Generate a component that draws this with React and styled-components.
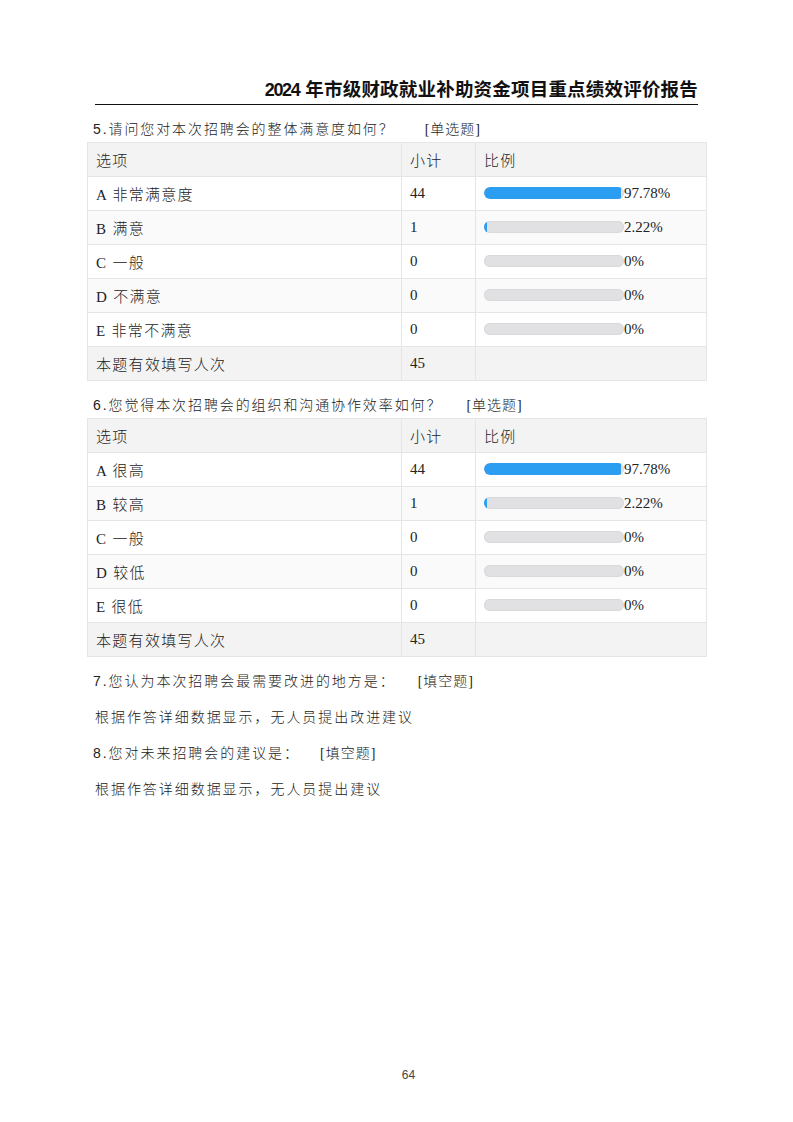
import React from 'react'
import styled, { createGlobalStyle } from 'styled-components'

const GlobalStyle = createGlobalStyle`
  html, body {
    margin: 0;
    padding: 0;
    background: #fff;
  }
`

const Page = styled.div`
  width: 793px;
  height: 1122px;
  box-sizing: border-box;
  padding: 76px 87px 0 87px;
  display: flex;
  flex-direction: column;
  font-family: "Liberation Serif", "Noto Sans CJK SC", serif;
  color: #222;
`

const Header = styled.div`
  margin: 0 8px;
  padding-bottom: 2px;
  border-bottom: 1.5px solid #111;
  text-align: right;
  font-family: "Noto Sans CJK SC", sans-serif;
  font-weight: 700;
  font-size: 18.5px;
  line-height: 24px;
  letter-spacing: 0.2px;
  color: #111;
`

const Year = styled.span`
  font-family: "Liberation Sans Narrow", "Liberation Sans", sans-serif;
  font-weight: 700;
  font-size: 18px;
  letter-spacing: -1.4px;
  margin-right: 6px;
`

const Question = styled.div`
  height: 37px;
  box-sizing: border-box;
  padding: 11px 0 0 6px;
  line-height: 26px;
  font-family: "Liberation Sans", "Noto Sans CJK SC", sans-serif;
  font-weight: 300;
  font-size: 14px;
  letter-spacing: 1.9px;
  color: #222;
  white-space: nowrap;
`

const Tag = styled.span`
  margin-left: ${p => p.$gap}px;
  font-family: "Liberation Serif", "Noto Sans CJK SC", serif;
  letter-spacing: 1px;
`

const TextLine = styled.div`
  height: 36px;
  line-height: 36px;
  padding-left: ${p => p.$indent || 6}px;
  font-family: "Liberation Sans", "Noto Sans CJK SC", sans-serif;
  font-weight: 300;
  font-size: 14px;
  letter-spacing: 1.95px;
  color: #222;
  white-space: nowrap;
`

const Spacer = styled.div`
  height: ${p => p.$h}px;
`

const Table = styled.table`
  width: 619px;
  border-collapse: collapse;
  table-layout: fixed;
  font-size: 15px;
`

const Row = styled.tr`
  height: 34px;
  background: ${p => (p.$tone === 'head' ? '#f3f3f3' : p.$tone === 'odd' ? '#fafafa' : '#fff')};
`

const Cell = styled.td`
  border: 1px solid #e5e5e5;
  padding: 0 0 1px 8px;
  vertical-align: middle;
  font-weight: 300;
  letter-spacing: ${p => (p.$cjk ? '1.3px' : '0')};
  color: #222;
  white-space: nowrap;
`

const Ratio = styled.div`
  display: flex;
  align-items: center;
`

const Track = styled.div`
  width: 140px;
  height: 12px;
  border-radius: 6px;
  background: #e1e1e3;
  overflow: hidden;
  box-shadow: inset 0 0 0 1px #d9d9db;
`

const Fill = styled.div`
  height: 100%;
  background: #2c9ef2;
  border-radius: 6px 0 0 6px;
`

const Pct = styled.span`
  font-size: 15px;
  color: #222;
`

const Footer = styled.div`
  margin-top: auto;
  padding: 0 0 40px 24px;
  text-align: center;
  font-family: "Liberation Sans", sans-serif;
  font-size: 12px;
  color: #444;
`

const q5 = [
  ['A', '非常满意度', 44, 97.78],
  ['B', '满意', 1, 2.22],
  ['C', '一般', 0, 0],
  ['D', '不满意', 0, 0],
  ['E', '非常不满意', 0, 0]
]

const q6 = [
  ['A', '很高', 44, 97.78],
  ['B', '较高', 1, 2.22],
  ['C', '一般', 0, 0],
  ['D', '较低', 0, 0],
  ['E', '很低', 0, 0]
]

function ResultTable ({ rows, total }) {
  return (
    <Table>
      <colgroup>
        <col style={{ width: 314 }} />
        <col style={{ width: 74 }} />
        <col style={{ width: 231 }} />
      </colgroup>
      <tbody>
        <Row $tone='head'>
          <Cell $cjk>选项</Cell>
          <Cell $cjk>小计</Cell>
          <Cell $cjk>比例</Cell>
        </Row>
        {rows.map(([key, label, count, pct], i) => (
          <Row key={key} $tone={i % 2 === 1 ? 'odd' : 'even'}>
            <Cell $cjk>{key} {label}</Cell>
            <Cell>{count}</Cell>
            <Cell>
              <Ratio>
                <Track>
                  <Fill style={{ width: `${pct}%` }} />
                </Track>
                <Pct>{pct === 0 ? '0%' : `${pct.toFixed(2)}%`}</Pct>
              </Ratio>
            </Cell>
          </Row>
        ))}
        <Row $tone='head'>
          <Cell $cjk>本题有效填写人次</Cell>
          <Cell>{total}</Cell>
          <Cell />
        </Row>
      </tbody>
    </Table>
  )
}

export default function App () {
  return (
    <Page>
      <GlobalStyle />
      <Header>
        <Year>2024</Year>年市级财政就业补助资金项目重点绩效评价报告
      </Header>

      <Question>
        5.请问您对本次招聘会的整体满意度如何？<Tag $gap={30}>[单选题]</Tag>
      </Question>
      <ResultTable rows={q5} total={45} />

      <Question>
        6.您觉得本次招聘会的组织和沟通协作效率如何？<Tag $gap={24}>[单选题]</Tag>
      </Question>
      <ResultTable rows={q6} total={45} />

      <Spacer $h={6} />
      <TextLine>
        7.您认为本次招聘会最需要改进的地方是：<Tag $gap={22}>[填空题]</Tag>
      </TextLine>
      <TextLine $indent={8}>根据作答详细数据显示，无人员提出改进建议</TextLine>
      <TextLine>
        8.您对未来招聘会的建议是：<Tag $gap={20}>[填空题]</Tag>
      </TextLine>
      <TextLine $indent={8}>根据作答详细数据显示，无人员提出建议</TextLine>

      <Footer>64</Footer>
    </Page>
  )
}
